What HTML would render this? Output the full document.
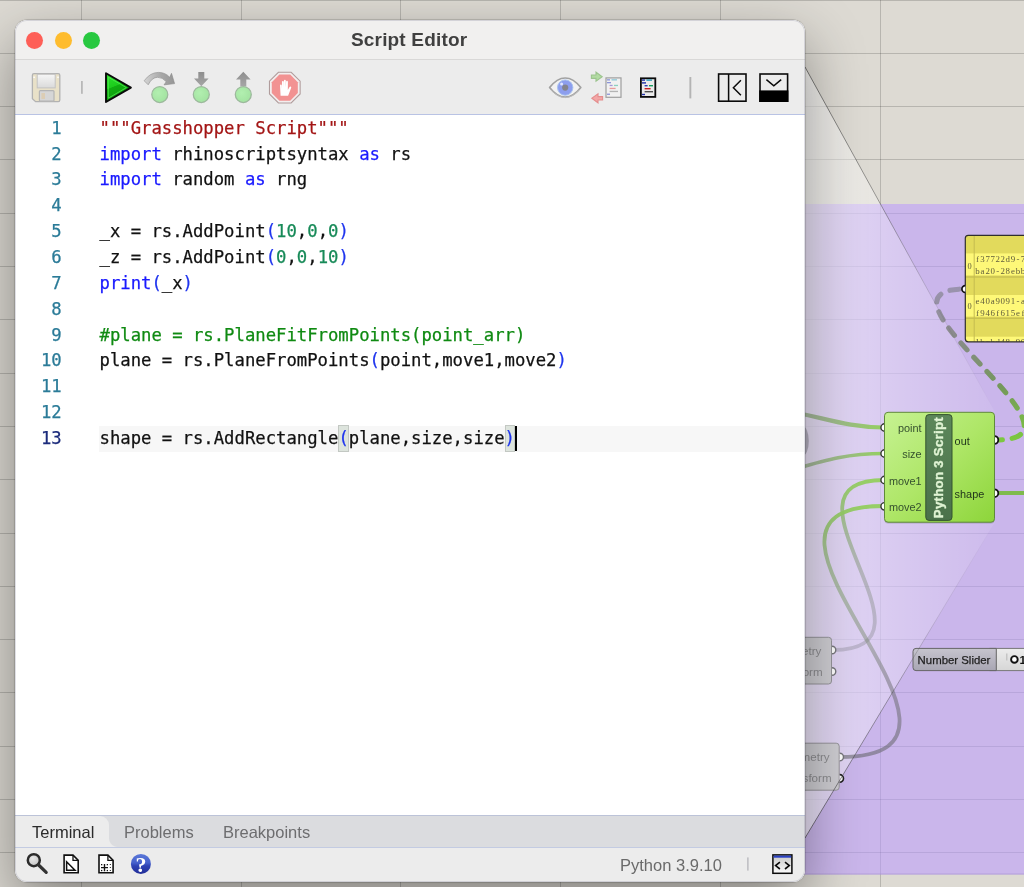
<!DOCTYPE html>
<html lang="en">
<head>
<meta charset="utf-8">
<title>Script Editor</title>
<style>
*{box-sizing:border-box;margin:0;padding:0}
html,body{width:1024px;height:887px;overflow:hidden}
body{position:relative;background:#dcd9d3;font-family:"Liberation Sans",sans-serif}
#canvas{position:absolute;left:0;top:0;width:1024px;height:887px}
#win{will-change:transform;position:absolute;left:15px;top:20px;width:790px;height:862px;border-radius:12px;background:#fff;overflow:hidden;
  box-shadow:0 0 0 0.5px rgba(0,0,0,.22),0 22px 58px rgba(0,0,0,.40),0 0 3px rgba(0,0,0,.10)}
#title{position:absolute;left:0;top:0;width:100%;height:40px;background:#f1f0ef;border-bottom:1px solid #d9d8d7}
#title .t{position:absolute;left:336px;top:8.5px;white-space:nowrap;font-weight:bold;font-size:19px;color:#404040;letter-spacing:0.17px}
.tl{position:absolute;top:11.5px;width:17px;height:17px;border-radius:50%}
#toolbar{position:absolute;left:0;top:40px;width:100%;height:55px;background:#ececec;border-bottom:1px solid #b9c3e4}
#editor{position:absolute;left:0;top:95px;width:100%;height:701px;background:#fff}
#code{position:absolute;left:0;top:0.7px;-webkit-text-stroke:0.25px currentColor;width:100%;font-family:"DejaVu Sans Mono","Liberation Mono",monospace;font-size:17.26px;line-height:25.85px;color:#111}
.ln{position:absolute;left:0;width:100%;height:25.85px;white-space:pre}
.ln .n{position:absolute;right:743.3px;top:0;color:#2b7b98}
.ln.cur .n{color:#1b2b7b}
.ln .c{position:absolute;left:84.5px;top:0}
.ln.cur:before{content:"";position:absolute;left:84px;right:1.5px;top:0.3px;height:25.4px;background:#f7f7f7}
.hb{background:#dde4dd;box-shadow:inset 0 0 0 1px #c3c8c3;padding:3.3px 0 3.6px}
.caret{position:absolute;top:0.3px;width:2.6px;height:24.6px;background:#000;margin-left:-0.4px}
.k{color:#1a1aff}.s{color:#a31515}.g{color:#0f8a12}.d{color:#178a58}.p{color:#1f35ee}
#tabs{position:absolute;left:0;top:795px;width:100%;height:32.5px;background:#dbdcdf;border-top:1px solid #bcc3d8;border-bottom:1px solid #c3cbe2;font-size:16.5px;color:#6d6d6f;white-space:nowrap}
#tabs span{position:absolute;top:6.5px}
#tabs .act{position:absolute;left:0;top:0;width:94px;height:31px;background:#ececec;border-radius:0 9px 0 0}
#tabs .act:after{content:"";position:absolute;left:94px;bottom:0;width:9px;height:9px;background:radial-gradient(circle at 100% 0,rgba(236,236,236,0) 8.5px,#ececec 9.5px)}
#status{position:absolute;left:0;top:827.5px;width:100%;height:35px;background:#ececec;font-size:16.5px;color:#6a6a6a}
</style>
</head>
<body>
<svg id="canvas" style="will-change:transform" width="1024" height="887" viewBox="0 0 1024 887">
<defs>
<linearGradient id="gFun" gradientUnits="userSpaceOnUse" x1="805" y1="0" x2="1000" y2="0"><stop offset="0" stop-color="#fff" stop-opacity=".62"/><stop offset="0.12" stop-color="#fff" stop-opacity=".45"/><stop offset="0.45" stop-color="#fff" stop-opacity=".28"/><stop offset="1" stop-color="#fff" stop-opacity=".06"/></linearGradient>
<linearGradient id="gLineT" gradientUnits="userSpaceOnUse" x1="805" y1="67" x2="995" y2="412"><stop offset="0" stop-color="#333" stop-opacity=".62"/><stop offset="0.45" stop-color="#444" stop-opacity=".45"/><stop offset="0.7" stop-color="#555" stop-opacity=".16"/><stop offset="1" stop-color="#555" stop-opacity="0"/></linearGradient>
<linearGradient id="gLineB" gradientUnits="userSpaceOnUse" x1="805" y1="838" x2="995" y2="522"><stop offset="0" stop-color="#333" stop-opacity=".62"/><stop offset="0.45" stop-color="#444" stop-opacity=".45"/><stop offset="0.7" stop-color="#555" stop-opacity=".16"/><stop offset="1" stop-color="#555" stop-opacity="0"/></linearGradient>
<linearGradient id="gPy" x1="0" y1="0" x2="1" y2="1"><stop offset="0" stop-color="#c6f292"/><stop offset="0.5" stop-color="#aee667"/><stop offset="1" stop-color="#8dd53a"/></linearGradient>
<linearGradient id="gBar" x1="0" y1="0" x2="0" y2="1"><stop offset="0" stop-color="#5c875a"/><stop offset="1" stop-color="#4a714a"/></linearGradient>
<linearGradient id="gSl" x1="0" y1="0" x2="0" y2="1"><stop offset="0" stop-color="#c6c4ce"/><stop offset="1" stop-color="#a8a6b3"/></linearGradient>
<linearGradient id="gSr" x1="0" y1="0" x2="0" y2="1"><stop offset="0" stop-color="#ececec"/><stop offset="1" stop-color="#d6d6d6"/></linearGradient>
<linearGradient id="gWA" gradientUnits="userSpaceOnUse" x1="0" y1="650" x2="0" y2="480"><stop offset="0" stop-color="#7e7e88" stop-opacity=".33"/><stop offset="0.45" stop-color="#83907c" stop-opacity=".45"/><stop offset="0.7" stop-color="#8eb077" stop-opacity=".68"/><stop offset="0.9" stop-color="#94c86a" stop-opacity=".9"/><stop offset="1" stop-color="#95cf62" stop-opacity=".97"/></linearGradient>
<linearGradient id="gWB" gradientUnits="userSpaceOnUse" x1="0" y1="757" x2="0" y2="506"><stop offset="0" stop-color="#66666c" stop-opacity=".58"/><stop offset="0.3" stop-color="#6c6c70" stop-opacity=".5"/><stop offset="0.45" stop-color="#7f8a78" stop-opacity=".5"/><stop offset="0.62" stop-color="#8aa27c" stop-opacity=".58"/><stop offset="0.8" stop-color="#90b676" stop-opacity=".72"/><stop offset="0.94" stop-color="#94c86a" stop-opacity=".9"/><stop offset="1" stop-color="#95cf62" stop-opacity=".97"/></linearGradient>
<linearGradient id="gWD" gradientUnits="userSpaceOnUse" x1="0" y1="289" x2="0" y2="440"><stop offset="0" stop-color="#8e8a9e" stop-opacity=".8"/><stop offset="0.3" stop-color="#848684" stop-opacity=".92"/><stop offset="0.65" stop-color="#74985a"/><stop offset="1" stop-color="#7cc840"/></linearGradient>
<clipPath id="cpPanel"><rect x="965.3" y="235.3" width="80" height="106.5" rx="3"/></clipPath>
<linearGradient id="gWP" gradientUnits="userSpaceOnUse" x1="800" y1="0" x2="884" y2="0"><stop offset="0" stop-color="#92aa84" stop-opacity=".75"/><stop offset="0.55" stop-color="#95bd76" stop-opacity=".9"/><stop offset="1" stop-color="#93cf60"/></linearGradient>
</defs>
<rect width="1024" height="887" fill="#dddad3"/>
<g stroke="#000" stroke-opacity=".17" stroke-width="1" fill="none"><path d="M0 0.5 H1024"/><path d="M0 53.5 H1024"/><path d="M0 106.5 H1024"/><path d="M0 159.5 H1024"/><path d="M0 213.5 H1024"/><path d="M0 266.5 H1024"/><path d="M0 319.5 H1024"/><path d="M0 373.5 H1024"/><path d="M0 426.5 H1024"/><path d="M0 479.5 H1024"/><path d="M0 533.5 H1024"/><path d="M0 586.5 H1024"/><path d="M0 639.5 H1024"/><path d="M0 692.5 H1024"/><path d="M0 746.5 H1024"/><path d="M0 799.5 H1024"/><path d="M0 852.5 H1024"/><path d="M0 906.5 H1024"/><path d="M81.5 0 V887"/><path d="M241.5 0 V887"/><path d="M400.5 0 V887"/><path d="M560.5 0 V887"/><path d="M720.5 0 V887"/><path d="M880.5 0 V887"/><path d="M1040.5 0 V887"/></g>
<rect x="700" y="204" width="400" height="670.5" fill="#b999ff" fill-opacity=".55"/>
<path d="M700 874 H1024" stroke="#a58fd0" stroke-opacity=".6" stroke-width="1"/>
<path d="M805 67 L995 412 V522 L805 838Z" fill="url(#gFun)"/>
<!-- wires -->
<g fill="none" stroke-linecap="round">
<path d="M770 409 C815 413 840 427.5 884 427.5" stroke="url(#gWP)" stroke-width="4.2"/>
<path d="M770 476 C815 464 838 453.5 884 453.5" stroke="url(#gWP)" stroke-width="3.6"/>
<path d="M833 650 C953 650 764 480 884 480" stroke="url(#gWA)" stroke-width="3.8"/>
<path d="M840 757 C1027 757 697 506 884 506" stroke="url(#gWB)" stroke-width="3.8"/>
<path d="M996 493 H1030" stroke="#7fbb4c" stroke-width="4"/>
<path d="M996 440 C1105 440 856 289 965 289" stroke="url(#gWD)" stroke-width="5.1" stroke-dasharray="9.2 10" stroke-dashoffset="3"/>
</g>
<!-- gray components -->
<g font-family="'Liberation Sans',sans-serif" font-size="11.6" fill="#8d8d90" text-anchor="end">
<rect x="790" y="637.3" width="41.5" height="46.7" rx="3" fill="#cfced3" stroke="#97969b"/>
<path d="M832 646.2 A3.8 3.8 0 0 1 832 653.8" fill="#fff" stroke="#77777c" stroke-width="1.4"/>
<path d="M832 667.7 A3.8 3.8 0 0 1 832 675.3" fill="#fff" stroke="#77777c" stroke-width="1.4"/>
<text x="821.3" y="654.5">metry</text><text x="822.6" y="675.5">sform</text>
<rect x="790" y="743.2" width="49.2" height="47" rx="3" fill="#cfced3" stroke="#97969b"/>
<path d="M839.7 753.2 A3.8 3.8 0 0 1 839.7 760.8" fill="#fff" stroke="#77777c" stroke-width="1.4"/>
<path d="M839.7 774.6 A3.8 3.8 0 0 1 839.7 782.2" fill="#fff" stroke="#222" stroke-width="1.6"/>
<text x="829.6" y="760.8">Geometry</text><text x="831.6" y="781.6">Transform</text>
</g>
<!-- number slider -->
<g font-family="'Liberation Sans',sans-serif">
<rect x="990" y="648.4" width="60" height="22.2" fill="url(#gSr)" stroke="#777"/>
<path d="M916 648.4 H996.3 V670.6 H916 Q913 670.6 913 667.6 V651.4 Q913 648.4 916 648.4Z" fill="url(#gSl)" stroke="#666"/>
<text x="917.6" y="664.4" font-size="11.4" fill="#1e1e1e" stroke="#1e1e1e" stroke-width=".25">Number Slider</text>
<path d="M1006.8 653.6 V660.4" stroke="#bdbdbd" stroke-width="1.2"/>
<circle cx="1014.4" cy="659.4" r="3.3" fill="#fff" stroke="#111" stroke-width="1.9"/>
<text x="1019.6" y="664" font-size="11.6" font-weight="bold" fill="#111">10</text>
</g>
<!-- yellow panel -->
<g>
<rect x="965.3" y="235.3" width="80" height="106.5" rx="3" fill="#e2da5c"/>
<g clip-path="url(#cpPanel)">
<rect x="965" y="253.4" width="80" height="22" fill="#fef878"/>
<rect x="965" y="295" width="80" height="21.6" fill="#fef878"/>
<rect x="965" y="336.7" width="80" height="10" fill="#fef878"/>
<path d="M965 277 H1030 M965 318.2 H1030" stroke="#bdb54c" stroke-width="1"/>
<path d="M974.2 235 V342" stroke="#c4bc50" stroke-width="1"/>
<g font-family="'Liberation Serif',serif" font-size="8.9" fill="#605c3c" text-anchor="middle">
<text x="977.52 982.57 987.62 992.67 997.73 1002.77 1007.82 1012.88 1017.92 1022.98 1028.03" y="261.8">f37722d9-76</text><text x="977.52 982.57 987.62 992.67 997.73 1002.77 1007.82 1012.88 1017.92 1022.98 1028.03" y="274.3">ba20-28ebb1</text>
<text x="977.52 982.57 987.62 992.67 997.73 1002.77 1007.82 1012.88 1017.92 1022.98 1028.03" y="303.7">e40a9091-a4</text><text x="977.52 982.57 987.62 992.67 997.73 1002.77 1007.82 1012.88 1017.92 1022.98 1028.03" y="316">f946f615ef0</text>
<text x="977.52 982.57 987.62 992.67 997.73 1002.77 1007.82 1012.88 1017.92 1022.98" y="345.4">1bcbd48-90</text>
<text x="969.6" y="268.8" font-size="8.4">0</text><text x="969.6" y="309.4" font-size="8.4">0</text>
</g>
</g>
<rect x="965.3" y="235.3" width="80" height="106.5" rx="3" fill="none" stroke="#2e2e2e" stroke-width="1.2"/>
<path d="M965.3 285.6 A3.4 3.4 0 0 0 965.3 292.4" fill="#fff" stroke="#111" stroke-width="1.7"/>
</g>
<ellipse cx="802.5" cy="441" rx="6.3" ry="15" fill="#6c6c74" fill-opacity=".42"/>
<!-- funnel -->
<path d="M805 67 L995 412" stroke="url(#gLineT)" stroke-width="1" fill="none"/>
<path d="M805 838 L995 522" stroke="url(#gLineB)" stroke-width="1" fill="none"/>
<!-- python component -->
<g font-family="'Liberation Sans',sans-serif">
<rect x="884.5" y="413.4" width="110" height="110" rx="3.5" fill="#000" fill-opacity=".18"/>
<g fill="#fff" stroke="#333" stroke-width="1.4">
<circle cx="884.6" cy="427.5" r="3.7"/><circle cx="884.6" cy="453.5" r="3.7"/><circle cx="884.6" cy="480" r="3.7"/><circle cx="884.6" cy="506.3" r="3.7"/>
<circle cx="994.4" cy="440" r="3.9" stroke="#111" stroke-width="1.8"/><circle cx="994.4" cy="493.2" r="3.9" stroke="#111" stroke-width="1.8"/>
</g>
<rect x="884.5" y="412.3" width="110" height="109.9" rx="3.5" fill="url(#gPy)" stroke="#5f8a3a" stroke-width="1"/>
<rect x="925.8" y="414.6" width="26.2" height="105.8" rx="3.2" fill="url(#gBar)" stroke="#35552f" stroke-width="1"/>
<text transform="translate(943.4 467.6) rotate(-90)" text-anchor="middle" font-size="13.2" font-weight="bold" fill="#e0f4d4" stroke="#e0f4d4" stroke-width=".35" letter-spacing=".3">Python 3 Script</text>
<g font-size="10.9" fill="#35502e">
<text x="921.6" y="431.7" text-anchor="end">point</text>
<text x="921.6" y="457.8" text-anchor="end">size</text>
<text x="921.6" y="484.7" text-anchor="end">move1</text>
<text x="921.6" y="511" text-anchor="end">move2</text>
<text x="954.6" y="445.2" fill="#22361c">out</text>
<text x="954.6" y="498.4" fill="#22361c">shape</text>
</g>
</g>
</svg>
<div id="win">
  <div id="title">
    <div class="tl" style="left:11px;background:#fe5f57"></div>
    <div class="tl" style="left:40px;background:#febc2e"></div>
    <div class="tl" style="left:68px;background:#28c840"></div>
    <div class="t">Script Editor</div>
  </div>
  <div id="toolbar"></div>
<svg id="tb" style="position:absolute;left:-15px;top:-20px;pointer-events:none" width="1024" height="887" viewBox="0 0 1024 887">
<defs>
<linearGradient id="gPlay" x1="0" y1="0" x2="0.35" y2="1"><stop offset="0" stop-color="#2fe12f"/><stop offset="0.5" stop-color="#1ccc1c"/><stop offset="0.52" stop-color="#10ad10"/><stop offset="1" stop-color="#0c9a0c"/></linearGradient>
<linearGradient id="gArc" x1="0" y1="0" x2="1" y2="0"><stop offset="0" stop-color="#d4d4d4"/><stop offset="0.55" stop-color="#a8a8a8"/><stop offset="1" stop-color="#969696"/></linearGradient>
<linearGradient id="gArr" x1="0" y1="0" x2="0" y2="1"><stop offset="0" stop-color="#8e8e8e"/><stop offset="1" stop-color="#a6a6a6"/></linearGradient>
<radialGradient id="gBall" cx="0.4" cy="0.4" r="0.7"><stop offset="0" stop-color="#b2efb0"/><stop offset="0.8" stop-color="#a4e4a2"/><stop offset="1" stop-color="#98cf98"/></radialGradient>
<linearGradient id="gLab" x1="0" y1="0" x2="0" y2="1"><stop offset="0" stop-color="#f6f6f6"/><stop offset="1" stop-color="#dadada"/></linearGradient>
<radialGradient id="gHelp" cx="0.45" cy="0.3" r="0.8"><stop offset="0" stop-color="#5f7fe8"/><stop offset="0.6" stop-color="#2f4fd0"/><stop offset="1" stop-color="#1a2a90"/></radialGradient>
</defs>
<!-- save (disabled) -->
<g>
<path d="M34 73.6 H58.2 Q59.8 73.6 59.8 75.2 V100 Q59.8 101.6 58.2 101.6 H35.6 L32.4 98.6 V75.2 Q32.4 73.6 34 73.6Z" fill="#e9e1c8" stroke="#b2b2b2" stroke-width="1.3"/>
<rect x="37.2" y="74.3" width="18" height="13.6" fill="url(#gLab)" stroke="#c2c2c2" stroke-width="1"/>
<rect x="39.4" y="90.6" width="14.6" height="10.6" rx="1" fill="#d6d6d6" stroke="#b4b4b4" stroke-width="1.2"/>
<rect x="41.4" y="93" width="3.6" height="6" fill="#dccdb4"/>
<rect x="33.4" y="76.5" width="1.4" height="1.6" fill="#fff"/><rect x="57.3" y="76.5" width="1.4" height="1.6" fill="#fff"/>
</g>
<rect x="81" y="81" width="1.8" height="12.8" fill="#b8b8b8"/>
<!-- run -->
<path d="M106 73.3 L130.9 87.6 L106 102Z" fill="url(#gPlay)" stroke="#0a0a0a" stroke-width="1.9" stroke-linejoin="round"/>
<path d="M108.3 77.2 L126.4 87.6 L108.3 98.2Z" fill="none" stroke="#5cf05c" stroke-opacity=".75" stroke-width="0.9" stroke-linejoin="round"/>
<!-- step over -->
<path d="M144.2 80.8 Q150 72.4 158.5 72.4 Q165.5 72.4 169.7 77.3 L171.5 73.3 L174.6 83.6 L164 84.9 L166.2 81.7 Q162.5 77.3 157.6 77.3 Q152 77.3 148.2 84.8Z" fill="url(#gArc)" stroke="#8c8c8c" stroke-width="0.6"/>
<circle cx="159.8" cy="94.5" r="8" fill="url(#gBall)" stroke="#9db89d" stroke-width="1.25"/>
<!-- step into -->
<path d="M198.3 72 H204.3 V78.4 H208.6 L201.3 86.2 L194 78.4 H198.3Z" fill="url(#gArr)"/>
<circle cx="201.3" cy="94.5" r="8" fill="url(#gBall)" stroke="#9db89d" stroke-width="1.25"/>
<!-- step out -->
<path d="M243.3 71.8 L250.6 79.6 H246.3 V86.4 H240.3 V79.6 H236 Z" fill="url(#gArr)"/>
<circle cx="243.3" cy="94.5" r="8" fill="url(#gBall)" stroke="#9db89d" stroke-width="1.25"/>
<!-- stop -->
<g transform="translate(284.8 87.6) scale(0.965)">
<path d="M-6.6 -15.9 H6.6 L15.9 -6.6 V6.6 L6.6 15.9 H-6.6 L-15.9 6.6 V-6.6Z" fill="#f3eeee" stroke="#b09c9c" stroke-width="1.1"/>
<path d="M-5.6 -13.5 H5.6 L13.5 -5.6 V5.6 L5.6 13.5 H-5.6 L-13.5 5.6 V-5.6Z" fill="#f29292"/>
<path transform="translate(0 1.1) scale(0.95)" d="M-4.6 7.6 L-5.2 -3.4 Q-5.2 -4.6 -4.3 -4.6 Q-3.4 -4.6 -3.3 -3.4 L-3.1 0 L-3.1 -7.2 Q-3.1 -8.4 -2.1 -8.4 Q-1.1 -8.4 -1.1 -7.2 V-1 L-0.9 -8.6 Q-0.9 -9.8 0.1 -9.8 Q1.1 -9.8 1.1 -8.6 V-1 L1.4 -7.4 Q1.4 -8.6 2.4 -8.6 Q3.4 -8.6 3.4 -7.4 L3.3 1.4 L5 -1.6 Q5.8 -2.8 6.7 -2.2 Q7.4 -1.7 6.8 -0.4 L3.6 7.6Z" fill="#fff"/>
</g>
<!-- eye -->
<g>
<path d="M549.6 87.6 Q557 78 565.2 78 Q573.4 78 580.8 87.6 Q573.4 97.2 565.2 97.2 Q557 97.2 549.6 87.6Z" fill="#f2f2f2" stroke="#a2a2a2" stroke-width="1.7" stroke-linejoin="round"/>
<circle cx="565.2" cy="87.6" r="7.7" fill="#8d9eee" stroke="#a9c3ee" stroke-width="1"/>
<circle cx="565.2" cy="87.6" r="3.1" fill="#84848c"/>
<circle cx="561.6" cy="84" r="1.5" fill="#dfe6ff"/>
<path d="M551 90 Q558 97.6 565.2 97.6 Q572.4 97.6 579.4 90" fill="none" stroke="#bdbdbd" stroke-width="1"/>
</g>
<!-- sync doc -->
<g>
<path d="M591.4 75 H596 V72.2 L602.2 76.7 L596 81.2 V78.4 H591.4Z" fill="#b2dba2" stroke="#9cc48e" stroke-width="1.1"/>
<path d="M602.6 96.6 H598 V93.8 L591.8 98.3 L598 102.8 V100 H602.6Z" fill="#f3a6a6" stroke="#e48e8e" stroke-width="1.1"/>
<rect x="606" y="77.9" width="15" height="19.4" fill="#f1f1f1" stroke="#9e9e9e" stroke-width="1.2"/>
<rect x="607" y="79.2" width="3" height="1.3" fill="#8c94d8"/><rect x="611.5" y="79.2" width="5.5" height="1.3" fill="#8cc8d8"/>
<rect x="607" y="82" width="4" height="1.3" fill="#8c94d8"/>
<rect x="609.6" y="84.8" width="3" height="1.3" fill="#a49ad8"/><rect x="614" y="84.8" width="4" height="1.3" fill="#8ed0c0"/>
<rect x="609.6" y="87.8" width="6" height="1.3" fill="#e89a9a"/>
<rect x="609.6" y="90.8" width="8.4" height="1.3" fill="#b4b4b4"/>
<rect x="607" y="93.6" width="3" height="1.3" fill="#8c94d8"/>
</g>
<!-- doc black -->
<g>
<rect x="640.9" y="78.3" width="14.4" height="18.6" fill="#ebebeb" stroke="#0a0a0a" stroke-width="1.8"/>
<rect x="642" y="79.4" width="3" height="1.4" fill="#2030a8"/><rect x="646.4" y="79.4" width="5.6" height="1.4" fill="#2a9ab8"/>
<rect x="642" y="82.2" width="4" height="1.4" fill="#2030a8"/>
<rect x="644.6" y="85" width="3" height="1.4" fill="#2a3ab0"/><rect x="649" y="85" width="4" height="1.4" fill="#18a060"/>
<rect x="644.6" y="88" width="6" height="1.4" fill="#c82020"/>
<rect x="644.6" y="91" width="8.4" height="1.4" fill="#505050"/>
<rect x="642" y="93.8" width="3" height="1.4" fill="#2030a8"/>
</g>
<rect x="689.4" y="77" width="1.9" height="21.4" fill="#b4b4b4"/>
<!-- panel left -->
<g fill="none" stroke="#0a0a0a">
<rect x="718.6" y="74" width="27.4" height="27.2" stroke-width="1.6"/>
<path d="M728.6 74 V101.2" stroke-width="1.5"/>
<path d="M740.9 80.2 L733.4 87.8 L740.9 95.3" stroke-width="1.5"/>
</g>
<!-- panel bottom -->
<g>
<rect x="760" y="74" width="27.6" height="27.2" fill="none" stroke="#0a0a0a" stroke-width="1.6"/>
<rect x="759.2" y="90.4" width="29.2" height="11.6" fill="#000"/>
<path d="M766.4 79.6 L773.8 85.8 L781.2 79.6" fill="none" stroke="#0a0a0a" stroke-width="1.5"/>
</g>
</svg>
  <div id="editor"><div id="code">
<div class="ln" style="top:0.1px"><span class="n">1</span><span class="c"><span class="s">"""Grasshopper Script"""</span></span></div>
<div class="ln" style="top:25.95px"><span class="n">2</span><span class="c"><span class="k">import</span> rhinoscriptsyntax <span class="k">as</span> rs</span></div>
<div class="ln" style="top:51.8px"><span class="n">3</span><span class="c"><span class="k">import</span> random <span class="k">as</span> rng</span></div>
<div class="ln" style="top:77.65px"><span class="n">4</span><span class="c"></span></div>
<div class="ln" style="top:103.5px"><span class="n">5</span><span class="c">_x = rs.AddPoint<span class="p">(</span><span class="d">10</span>,<span class="d">0</span>,<span class="d">0</span><span class="p">)</span></span></div>
<div class="ln" style="top:129.35px"><span class="n">6</span><span class="c">_z = rs.AddPoint<span class="p">(</span><span class="d">0</span>,<span class="d">0</span>,<span class="d">10</span><span class="p">)</span></span></div>
<div class="ln" style="top:155.2px"><span class="n">7</span><span class="c"><span class="k">print</span><span class="p">(</span>_x<span class="p">)</span></span></div>
<div class="ln" style="top:181.05px"><span class="n">8</span><span class="c"></span></div>
<div class="ln" style="top:206.9px"><span class="n">9</span><span class="c"><span class="g">#plane = rs.PlaneFitFromPoints(point_arr)</span></span></div>
<div class="ln" style="top:232.75px"><span class="n">10</span><span class="c">plane = rs.PlaneFromPoints<span class="p">(</span>point,move1,move2<span class="p">)</span></span></div>
<div class="ln" style="top:258.6px"><span class="n">11</span><span class="c"></span></div>
<div class="ln" style="top:284.45px"><span class="n">12</span><span class="c"></span></div>
<div class="ln cur" style="top:310.3px"><span class="n">13</span><span class="c">shape = rs.AddRectangle<span class="p hb">(</span>plane,size,size<span class="p hb">)</span><span class="caret"></span></span></div>
</div></div>
  <div id="tabs"><div class="act"></div><span style="left:17px;color:#2b2b2b">Terminal</span><span style="left:109px">Problems</span><span style="left:208px">Breakpoints</span></div>
  <div id="status"><span style="position:absolute;left:605px;top:8.5px;white-space:nowrap">Python 3.9.10</span></div>
<svg style="position:absolute;left:-15px;top:-20px;pointer-events:none" width="1024" height="887" viewBox="0 0 1024 887">
<defs><linearGradient id="gIc" x1="0" y1="0" x2="0" y2="1"><stop offset="0" stop-color="#c8c8c8"/><stop offset="1" stop-color="#fafafa"/></linearGradient>
<linearGradient id="gHl" x1="0" y1="0" x2="0" y2="1"><stop offset="0" stop-color="#5b78d8"/><stop offset="0.45" stop-color="#4560cc"/><stop offset="0.6" stop-color="#2e42b4"/><stop offset="1" stop-color="#222e98"/></linearGradient>
<radialGradient id="gLens" cx="0.4" cy="0.35" r="0.7"><stop offset="0" stop-color="#e8e8e8"/><stop offset="1" stop-color="#c4c4c4"/></radialGradient></defs>
<!-- magnifier -->
<circle cx="33.8" cy="860.2" r="6" fill="url(#gLens)" stroke="#2b2b2b" stroke-width="2.5"/>
<path d="M38.6 865 L46.2 872.4" stroke="#333" stroke-width="3.2" stroke-linecap="round"/>
<!-- doc1 -->
<path d="M64.1 855.1 H73 L78.2 860.3 V872.8 H64.1Z" fill="#fff" stroke="#111" stroke-width="1.6" stroke-linejoin="miter"/>
<path d="M73 855.1 V860.3 H78.2" fill="none" stroke="#111" stroke-width="1.3"/>
<path d="M66.6 861.8 V870.2 H75Z" fill="#fff" stroke="#111" stroke-width="1.5" stroke-linejoin="miter"/>
<!-- doc2 -->
<path d="M99 855.1 H107.9 L113.1 860.3 V872.8 H99Z" fill="#fff" stroke="#111" stroke-width="1.6"/>
<path d="M107.9 855.1 V860.3 H113.1" fill="none" stroke="#111" stroke-width="1.3"/>
<path d="M101 867.6 H108 M104.5 864 V871.2" stroke="#111" stroke-width="1.4"/>
<g fill="#111"><rect x="101" y="864" width="1.3" height="1.3"/><rect x="106.7" y="864" width="1.3" height="1.3"/><rect x="101" y="869.9" width="1.3" height="1.3"/><rect x="106.7" y="869.9" width="1.3" height="1.3"/><rect x="109.8" y="864" width="1" height="1"/><rect x="109.8" y="867" width="1" height="1"/><rect x="109.8" y="870" width="1" height="1"/></g>
<!-- help -->
<circle cx="140.9" cy="863.9" r="10" fill="url(#gHl)"/>
<text x="140.9" y="871.6" text-anchor="middle" font-family="'Liberation Serif',serif" font-weight="bold" font-size="22" fill="#fff">?</text>
<!-- right -->
<rect x="747" y="857.4" width="1.7" height="13.2" fill="#c2c2c6"/>
<rect x="772.9" y="854.9" width="19" height="18.4" fill="url(#gIc)" stroke="#0a0a0a" stroke-width="1.5"/>
<rect x="773.6" y="855.6" width="17.6" height="2.1" fill="#2a41c4"/>
<path d="M779.9 862.2 L775.6 865.6 L779.9 869 M785 862.2 L789.3 865.6 L785 869" fill="none" stroke="#0a0a0a" stroke-width="1.6"/>
</svg>
<div style="position:absolute;left:0;top:0;right:0;bottom:0;border-radius:12px;box-shadow:inset 0 0 0 1px rgba(110,110,135,.22);pointer-events:none"></div>
</div>
</body>
</html>
